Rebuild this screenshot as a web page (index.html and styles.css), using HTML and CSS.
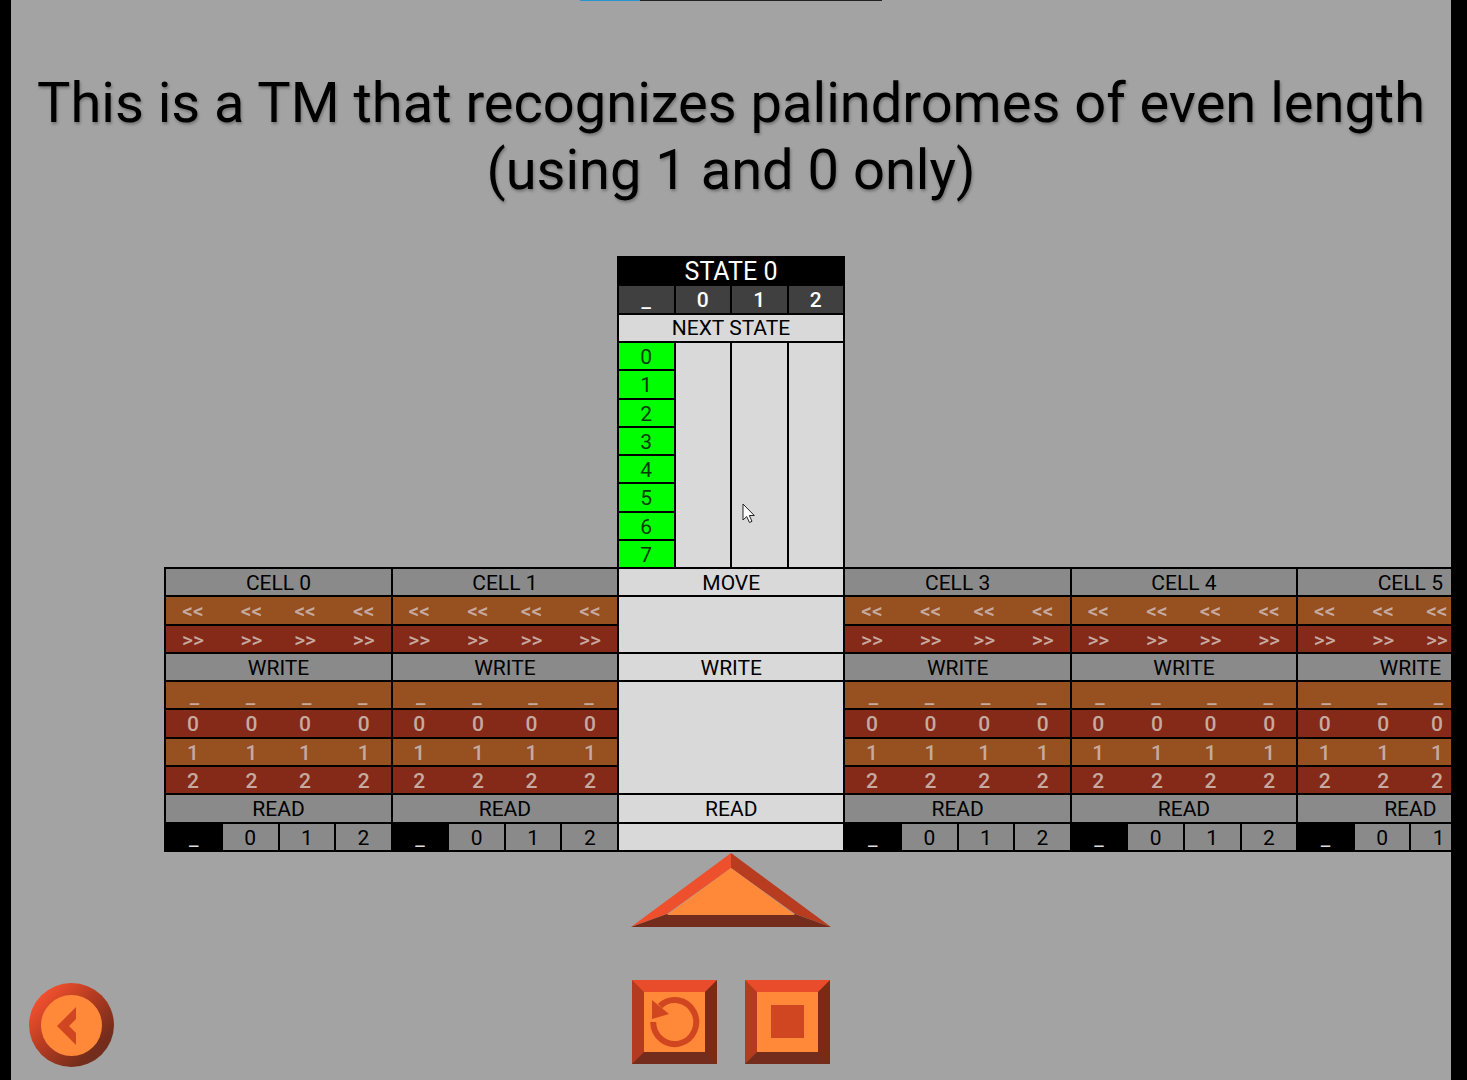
FILE: index.html
```html
<!DOCTYPE html>
<html lang="en">
<head>
<meta charset="utf-8">
<title>Turing machine</title>
<link rel="stylesheet" href="styles.css">
</head>
<body>
<main class="stage">
  <div class="progress"><div class="progress-fill"></div></div>
  <h1 class="title">This is a TM that recognizes palindromes of even length (using 1 and 0 only)</h1>

  <section class="head">
    <div class="head-name">STATE 0</div>
    <div class="head-symbol">_</div><div class="head-symbol">0</div><div class="head-symbol">1</div><div class="head-symbol">2</div>
    <div class="head-label">NEXT STATE</div>
    <div class="states">
      <button class="state">0</button>
      <button class="state">1</button>
      <button class="state">2</button>
      <button class="state">3</button>
      <button class="state">4</button>
      <button class="state">5</button>
      <button class="state">6</button>
      <button class="state">7</button>
    </div>
    <div class="lane"></div><div class="lane"></div><div class="lane"></div>
    <svg class="cursor" width="14" height="22" viewBox="0 0 14 22"><path d="M1 1V17L4.700 13.500L7.500 19.500L10 18.300L7.300 12.500H12.300Z" fill="#fff" stroke="#222" stroke-width="1"/></svg>
  </section>

  <section class="tape" id="tape"></section>

  <svg class="pointer" width="200" height="74" viewBox="0 0 200 74">
    <path d="M100 0L0 74L36 61L100 15Z" fill="#ee502d"/>
    <path d="M100 0L200 74L164 61L100 15Z" fill="#b83d20"/>
    <path d="M0 74L36 61H164L200 74Z" fill="#742d1c"/>
    <path d="M100 15L164 62H36Z" fill="#ff8939"/>
  </svg>

  <nav class="controls">
    <button class="back" aria-label="Back">
      <svg width="61" height="61" viewBox="0 0 61 61"><path d="M35 12V24L28 31L35 38V50L16 31Z" fill="#d04621"/></svg>
    </button>
    <button class="square" aria-label="Restart">
      <svg width="61" height="60" viewBox="0 0 61 60">
        <path d="M9.200 30A21.500 22 0 1 0 16 14" fill="none" stroke="#d04621" stroke-width="6"/>
        <path d="M8 8L25 22L8 27Z" fill="#d04621"/>
      </svg>
    </button>
    <button class="square" aria-label="Stop">
      <svg width="61" height="60" viewBox="0 0 61 60"><path d="M14 13H47V46H14Z" fill="#d04621"/></svg>
    </button>
  </nav>
</main>
<script src="script.js"></script>
</body>
</html>
```
FILE: styles.css
```css
* { box-sizing: border-box; }
body {
  margin: 0;
  background: #000;
  color: #000;
  font: 21px/28px Roboto, sans-serif;
}
button { border: 0; padding: 0; color: inherit; font: inherit; }
svg { display: block; }

.stage {
  display: flex;
  flex-direction: column;
  min-height: 100vh;
  margin: 0 16px 0 11px;
  background: #a3a3a3;
  overflow: hidden;
}
.progress { width: 302px; height: 1px; margin: 0 auto; background: #222; }
.progress-fill { width: 20%; height: 100%; background: #2994cf; }

.title {
  margin: 69px 20px 52px;
  font-size: 56px;
  font-weight: 400;
  line-height: 67px;
  text-align: center;
  text-shadow: 1px 2px 3px rgba(0, 0, 0, .3);
}

.head {
  position: relative;
  display: grid;
  grid-template-columns: repeat(4, 1fr);
  grid-template-rows: 28px 27px 26px minmax(0, 1fr);
  gap: 2px;
  width: 228px;
  height: 311px;
  margin: 0 auto;
  padding: 0 2px;
  background: #000;
  text-align: center;
}
.head-name { grid-column: 1 / -1; color: #fff; font-size: 25px; line-height: 32px; }
.head-symbol { background: #404040; color: #fff; font-weight: 500; }
.head-label { grid-column: 1 / -1; background: #d9d9d9; line-height: 26px; }
.states { display: grid; grid-template-rows: repeat(8, minmax(0, 1fr)); gap: 2px; min-height: 0; }
.state { background: #0f0; color: #053905; }
.lane { background: #d9d9d9; }
.cursor { position: absolute; left: 125px; top: 247px; }

.tape {
  display: grid;
  grid-template-columns: 10.65% repeat(6, 15.72%);
  grid-template-rows: 285px;
}
.cell {
  display: grid;
  grid-template-rows: repeat(10, minmax(0, 1fr));
  gap: 2px;
  padding: 2px 0 2px 2px;
  background: #000;
}
.cell:first-child { grid-column-start: 2; }
.label { background: #8a8a8a; text-align: center; }
.row { display: grid; grid-template-columns: repeat(4, 1fr); color: #c6aaa0; font-weight: 500; text-align: center; }
.paired span:nth-child(even) { padding-left: 2px; }
.paired span:nth-child(odd) { padding-right: 3px; }
.orange { background: #97501f; }
.red { background: #852918; }
.read { display: grid; grid-template-columns: repeat(4, 1fr); grid-template-rows: minmax(0, 1fr); gap: 2px; }
.read button { background: #8a8a8a; }
.read .current { background: #000; color: #ddd; }
.active .label, .empty { background: #d9d9d9; }
.move-area { grid-row: span 2; }
.write-area { grid-row: span 4; }

.pointer { margin: 1px auto 53px; }

.controls { display: grid; grid-template-columns: 1fr 85px 85px 1fr; column-gap: 28px; }
.back {
  display: grid;
  place-items: center;
  width: 85px;
  height: 84px;
  margin: 3px 0 0 18px;
  border-radius: 50%;
  background: linear-gradient(135deg, #f0502e 15%, #b53b20 45%, #742d1c 78%);
}
.back svg { border-radius: 50%; background: #ff8939; }
.square {
  height: 84px;
  border: 12px solid;
  border-color: #e94c2a #7c2916 #742d1c #b53b20;
  background: #ff8939;
}
```
FILE: script.js
```js
// Builds the tape; the machine's head stands on cell 2.
const ACTIVE_CELL = 2;
const label = text => `<div class="label">${text}</div>`;
const row = (symbol, style) =>
  `<div class="row ${style}">${`<span>${symbol}</span>`.repeat(4)}</div>`;

function cell(index) {
  if (index === ACTIVE_CELL) {
    return `<div class="cell active">${label('MOVE')}<div class="empty move-area"></div>
      ${label('WRITE')}<div class="empty write-area"></div>
      ${label('READ')}<div class="empty"></div></div>`;
  }
  return `<div class="cell">${label('CELL ' + index)}
    ${row('&lt;&lt;', 'paired orange')}${row('&gt;&gt;', 'paired red')}
    ${label('WRITE')}
    ${row('_', 'orange')}${row('0', 'paired red')}${row('1', 'paired orange')}${row('2', 'paired red')}
    ${label('READ')}
    <div class="read"><button class="current">_</button><button>0</button><button>1</button><button>2</button></div></div>`;
}

document.getElementById('tape').innerHTML = [0, 1, 2, 3, 4, 5].map(cell).join('');
```
